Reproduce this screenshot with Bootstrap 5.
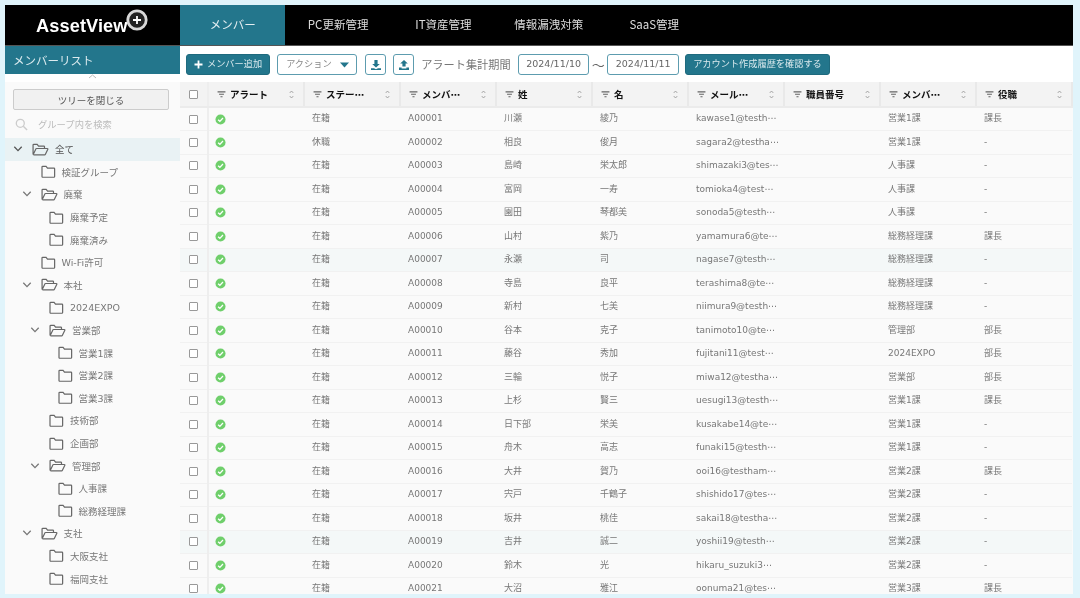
<!DOCTYPE html>
<html lang="ja">
<head>
<meta charset="utf-8">
<title>AssetView メンバー</title>
<link href="https://cdn.jsdelivr.net/npm/bootstrap@5.3.0/dist/css/bootstrap.min.css" rel="stylesheet">
<style>
:root{--teal:#23768c;}
html,body{height:598px;overflow:hidden;}
body{background:#e0f4fb;padding:5px 7px 4px 5px;font-family:"DejaVu Sans","Noto Sans CJK JP",sans-serif;font-size:9px;color:#777;}
.app-shell{height:589px;background:#fff;filter:blur(.3px);}
.top-bar{height:41px;background:#000;border-bottom:1px solid #555;flex:none;}
.logo-box{width:175px;color:#fff;padding-left:31px;}
.logo-word{font:700 18.2px/1 "Liberation Sans",sans-serif;letter-spacing:.1px;margin-top:12px;}
.logo-mark{margin-left:-2px;margin-top:4px;flex:none;}
.tab-item{width:105.4px;color:#ddd;font-family:"Noto Sans CJK JP",sans-serif;font-size:11.5px;text-decoration:none;}
.tab-item.active{background:var(--teal);color:#e4eef1;}
.side-pane{width:175px;flex:none;background:#fafafa;}
.side-title{height:28px;background:var(--teal);color:#dcebef;font:11.5px "Noto Sans CJK JP",sans-serif;padding:0 8px;}
.side-caret{height:8px;background:#fff;}
.close-tree{display:block;margin:7px 11px 0 8px;width:156px;height:21px;padding:0;background:#f1f1f1;border:1px solid #ccc;border-radius:2px;color:#555;font:9.5px "Noto Sans CJK JP",sans-serif;}
.tree-search{height:22px;margin:3px 0 3px;padding-left:10px;color:#bbb;font:9.3px "Noto Sans CJK JP",sans-serif;gap:10px;}
.tree-row{height:22.6px;font:9.5px "DejaVu Sans","Noto Sans CJK JP",sans-serif;color:#777;}
.tree-row.sel{background:#e9f2f4;color:#555;}
.tree-row .chev{width:14px;flex:none;margin-right:7px;text-align:center;line-height:0;}
.tree-row .fold{flex:none;margin-right:6px;}
.lv0{padding-left:6px;}.lv1{padding-left:14.5px;}.lv2{padding-left:23px;}.lv3{padding-left:31.5px;}
.main-pane{min-width:0;}
.tool-bar{height:36px;flex:none;padding:8px 0 0 6px;gap:7px;}
.btn-teal{height:21px;background:var(--teal);color:#dbeaee;border:1px solid #1f6a7e;border-radius:3px;font:9.2px "Noto Sans CJK JP",sans-serif;padding:0 7px 4px;white-space:nowrap;display:flex;align-items:center;}
.btn-teal:hover{background:var(--teal);color:#fff;}
.btn-teal svg{margin-top:3px;}
.btn-line{height:21px;background:#fff;border:1px solid #5d9caf;border-radius:3px;color:var(--teal);padding:0;display:flex;align-items:center;justify-content:center;font:9.2px "Noto Sans CJK JP",sans-serif;}
.action-sel{width:80px;justify-content:space-between;padding:0 7px 0 8px;color:#8a8a8a;}
.action-sel span{margin-top:-4px;}
.square-btn{width:21px;}
.first-square{margin-left:1px;}
.period-label{font:11.2px "Noto Sans CJK JP",sans-serif;color:#777;line-height:20px;white-space:nowrap;width:90px;}
.date-box{width:71px;height:21px;border:1px solid #5d9caf;border-radius:3px;font-size:9.5px;color:#666;text-align:center;line-height:18px;}
.date-box.second{width:72px;margin-right:-1px;}
.tilde{font:13px/21px "Noto Sans CJK JP",sans-serif;color:#666;margin:0 -4.5px;}
.grid-wrap{overflow:hidden;height:513px;background:#fafafa;}
.member-table{table-layout:fixed;width:892px;margin:0;font-size:9px;color:#777;}
.member-table th,.member-table td{padding:0 8px;background:#fafafa;color:#777;box-shadow:none;border-bottom:1px solid #f1f1f1;white-space:nowrap;overflow:hidden;vertical-align:middle;}
.member-table thead th{height:25px;background:#f3f3f3;color:#111;font:700 9.5px "DejaVu Sans","Noto Sans CJK JP",sans-serif;border-bottom:2px solid #ebebeb;border-right:2px solid #e9e9e9;}
.member-table tbody tr{height:23.5px;}
.member-table tbody td:nth-child(2){padding-left:6px;}
.member-table tbody td svg{display:block;}
.member-table tr.hl td{background:#f4f8f8;}
.member-table .chk-col{width:28px;padding:0;text-align:center;border-right:2px solid #eee;}
.member-table tbody .chk-col{padding:0;}
.member-table .data-col{width:96px;}
.member-table .form-check-input{width:9px;height:9px;margin:0;display:block;margin-inline:auto;border-color:#999;border-radius:1px;float:none;}
.head-cell{gap:4px;}
.head-cell .sort{margin-left:auto;flex:none;}
</style>
</head>
<body>
<svg width="0" height="0" class="d-none" aria-hidden="true">
<symbol id="i-ok" viewBox="0 0 12 12"><circle cx="6" cy="6" r="5.5" fill="#6fcf6b"/><path d="M3.4 6.2 5.3 8l3.4-3.7" fill="none" stroke="#fff" stroke-width="1.4"/></symbol>
<symbol id="i-filter" viewBox="0 0 10 8"><path d="M.5 1h9M2.2 3.8h5.6M3.8 6.6h2.4" fill="none" stroke="#666" stroke-width="1.2"/></symbol>
<symbol id="i-sort" viewBox="0 0 8 12"><path d="M2 4.2 4 2l2 2.2M2 7.8 4 10l2-2.2" fill="none" stroke="#999" stroke-width="1"/></symbol>
<symbol id="i-closed" viewBox="0 0 16 14"><path d="M1 12.4V2.2c0-.5.3-.8.8-.8h3.6l1.5 1.9h6.9c.5 0 .8.3.8.8v8.3c0 .5-.3.8-.8.8H1.8c-.5 0-.8-.3-.8-.8Z" fill="none" stroke="#666" stroke-width="1.3"/></symbol>
<symbol id="i-open" viewBox="0 0 18 14"><path d="M1 12.4V2.2c0-.5.3-.8.8-.8h3.6l1.5 1.9h5.6c.5 0 .8.3.8.8V6M1 12.6l3-6.2c.2-.3.4-.5.8-.5h11.6c.5 0 .7.4.5.8l-2.6 5.4c-.2.4-.4.6-.8.6H1.4" fill="none" stroke="#666" stroke-width="1.3"/></symbol>
<symbol id="i-chev" viewBox="0 0 10 8"><path d="M1.3 1.8 5 5.6l3.7-3.8" fill="none" stroke="currentColor" stroke-width="1.3"/></symbol>
<symbol id="i-down" viewBox="0 0 12 12"><path d="M4.4 1h3.2v4h2.2L6 8.4 2.2 5h2.2ZM1 9.2h3l2 1 2-1h3V11H1Z" fill="#23768c"/></symbol>
<symbol id="i-up" viewBox="0 0 12 12"><path d="M4.4 7.6h3.2v-3h2.2L6 1 2.2 4.6h2.2ZM1 8.6h2.6v1h4.8v-1H11V11H1Z" fill="#23768c"/></symbol>
</svg>
<div class="app-shell d-flex flex-column">
  <header class="top-bar d-flex">
    <div class="logo-box d-flex align-items-start">
      <span class="logo-word">AssetView</span>
      <svg class="logo-mark" width="22" height="22" viewBox="0 0 22 22"><circle cx="11" cy="11" r="9.2" fill="#222" stroke="#d8d8d8" stroke-width="2.8"/><path d="M11 7v8M7 11h8" stroke="#fff" stroke-width="1.8"/></svg>
    </div>
    <nav class="d-flex">
      <a class="tab-item active d-flex align-items-center justify-content-center" href="#">メンバー</a>
      <a class="tab-item d-flex align-items-center justify-content-center" href="#">PC更新管理</a>
      <a class="tab-item d-flex align-items-center justify-content-center" href="#">IT資産管理</a>
      <a class="tab-item d-flex align-items-center justify-content-center" href="#">情報漏洩対策</a>
      <a class="tab-item d-flex align-items-center justify-content-center" href="#">SaaS管理</a>
    </nav>
  </header>
  <div class="d-flex flex-grow-1 overflow-hidden">
    <aside class="side-pane overflow-hidden">
      <div class="side-title d-flex align-items-center">メンバーリスト</div>
      <div class="side-caret d-flex justify-content-center"><svg width="9" height="5" viewBox="0 0 9 5"><path d="M1 4 4.5 1 8 4" fill="none" stroke="#bbb"/></svg></div>
      <button type="button" class="btn close-tree">ツリーを閉じる</button>
      <div class="tree-search d-flex align-items-center"><svg width="13" height="13" viewBox="0 0 13 13"><circle cx="5.3" cy="5.3" r="4" fill="none" stroke="#ccc" stroke-width="1.3"/><path d="m8.3 8.3 3.8 3.8" stroke="#ccc" stroke-width="1.4"/></svg><span>グループ内を検索</span></div>
      <div class="tree-row sel lv0 d-flex align-items-center"><span class="chev"><svg width="10" height="8"><use href="#i-chev"/></svg></span><svg class="fold" width="17" height="13"><use href="#i-open"/></svg>全て</div>
      <div class="tree-row lv1 d-flex align-items-center"><span class="chev"></span><svg class="fold" width="15" height="13"><use href="#i-closed"/></svg>検証グループ</div>
      <div class="tree-row lv1 d-flex align-items-center"><span class="chev"><svg width="10" height="8"><use href="#i-chev"/></svg></span><svg class="fold" width="17" height="13"><use href="#i-open"/></svg>廃棄</div>
      <div class="tree-row lv2 d-flex align-items-center"><span class="chev"></span><svg class="fold" width="15" height="13"><use href="#i-closed"/></svg>廃棄予定</div>
      <div class="tree-row lv2 d-flex align-items-center"><span class="chev"></span><svg class="fold" width="15" height="13"><use href="#i-closed"/></svg>廃棄済み</div>
      <div class="tree-row lv1 d-flex align-items-center"><span class="chev"></span><svg class="fold" width="15" height="13"><use href="#i-closed"/></svg>Wi-Fi許可</div>
      <div class="tree-row lv1 d-flex align-items-center"><span class="chev"><svg width="10" height="8"><use href="#i-chev"/></svg></span><svg class="fold" width="17" height="13"><use href="#i-open"/></svg>本社</div>
      <div class="tree-row lv2 d-flex align-items-center"><span class="chev"></span><svg class="fold" width="15" height="13"><use href="#i-closed"/></svg>2024EXPO</div>
      <div class="tree-row lv2 d-flex align-items-center"><span class="chev"><svg width="10" height="8"><use href="#i-chev"/></svg></span><svg class="fold" width="17" height="13"><use href="#i-open"/></svg>営業部</div>
      <div class="tree-row lv3 d-flex align-items-center"><span class="chev"></span><svg class="fold" width="15" height="13"><use href="#i-closed"/></svg>営業1課</div>
      <div class="tree-row lv3 d-flex align-items-center"><span class="chev"></span><svg class="fold" width="15" height="13"><use href="#i-closed"/></svg>営業2課</div>
      <div class="tree-row lv3 d-flex align-items-center"><span class="chev"></span><svg class="fold" width="15" height="13"><use href="#i-closed"/></svg>営業3課</div>
      <div class="tree-row lv2 d-flex align-items-center"><span class="chev"></span><svg class="fold" width="15" height="13"><use href="#i-closed"/></svg>技術部</div>
      <div class="tree-row lv2 d-flex align-items-center"><span class="chev"></span><svg class="fold" width="15" height="13"><use href="#i-closed"/></svg>企画部</div>
      <div class="tree-row lv2 d-flex align-items-center"><span class="chev"><svg width="10" height="8"><use href="#i-chev"/></svg></span><svg class="fold" width="17" height="13"><use href="#i-open"/></svg>管理部</div>
      <div class="tree-row lv3 d-flex align-items-center"><span class="chev"></span><svg class="fold" width="15" height="13"><use href="#i-closed"/></svg>人事課</div>
      <div class="tree-row lv3 d-flex align-items-center"><span class="chev"></span><svg class="fold" width="15" height="13"><use href="#i-closed"/></svg>総務経理課</div>
      <div class="tree-row lv1 d-flex align-items-center"><span class="chev"><svg width="10" height="8"><use href="#i-chev"/></svg></span><svg class="fold" width="17" height="13"><use href="#i-open"/></svg>支社</div>
      <div class="tree-row lv2 d-flex align-items-center"><span class="chev"></span><svg class="fold" width="15" height="13"><use href="#i-closed"/></svg>大阪支社</div>
      <div class="tree-row lv2 d-flex align-items-center"><span class="chev"></span><svg class="fold" width="15" height="13"><use href="#i-closed"/></svg>福岡支社</div>
    </aside>
    <main class="main-pane flex-grow-1 d-flex flex-column">
      <div class="tool-bar d-flex align-items-start">
        <button type="button" class="btn btn-teal"><svg class="me-1" width="9" height="9" viewBox="0 0 9 9"><path d="M4.5.5v8M.5 4.5h8" stroke="#fff" stroke-width="1.8"/></svg>メンバー追加</button>
        <button type="button" class="btn btn-line action-sel"><span>アクション</span><svg width="9" height="6" viewBox="0 0 9 6"><path d="M0 .5h9L4.5 5.5Z" fill="#23768c"/></svg></button>
        <button type="button" class="btn btn-line square-btn first-square"><svg width="12" height="12"><use href="#i-down"/></svg></button>
        <button type="button" class="btn btn-line square-btn"><svg width="12" height="12"><use href="#i-up"/></svg></button>
        <span class="period-label">アラート集計期間</span>
        <span class="date-box">2024/11/10</span>
        <span class="tilde">～</span>
        <span class="date-box second">2024/11/11</span>
        <button type="button" class="btn btn-teal">アカウント作成履歴を確認する</button>
      </div>
      <div class="grid-wrap">
        <table class="table member-table">
          <thead><tr>
            <th class="chk-col"><input class="form-check-input" type="checkbox" aria-label="全選択"></th>
            <th class="data-col"><div class="head-cell d-flex align-items-center"><svg width="9" height="7"><use href="#i-filter"/></svg>アラート<svg class="sort" width="7" height="11"><use href="#i-sort"/></svg></div></th>
            <th class="data-col"><div class="head-cell d-flex align-items-center"><svg width="9" height="7"><use href="#i-filter"/></svg>ステー⋯<svg class="sort" width="7" height="11"><use href="#i-sort"/></svg></div></th>
            <th class="data-col"><div class="head-cell d-flex align-items-center"><svg width="9" height="7"><use href="#i-filter"/></svg>メンバ⋯<svg class="sort" width="7" height="11"><use href="#i-sort"/></svg></div></th>
            <th class="data-col"><div class="head-cell d-flex align-items-center"><svg width="9" height="7"><use href="#i-filter"/></svg>姓<svg class="sort" width="7" height="11"><use href="#i-sort"/></svg></div></th>
            <th class="data-col"><div class="head-cell d-flex align-items-center"><svg width="9" height="7"><use href="#i-filter"/></svg>名<svg class="sort" width="7" height="11"><use href="#i-sort"/></svg></div></th>
            <th class="data-col"><div class="head-cell d-flex align-items-center"><svg width="9" height="7"><use href="#i-filter"/></svg>メール⋯<svg class="sort" width="7" height="11"><use href="#i-sort"/></svg></div></th>
            <th class="data-col"><div class="head-cell d-flex align-items-center"><svg width="9" height="7"><use href="#i-filter"/></svg>職員番号<svg class="sort" width="7" height="11"><use href="#i-sort"/></svg></div></th>
            <th class="data-col"><div class="head-cell d-flex align-items-center"><svg width="9" height="7"><use href="#i-filter"/></svg>メンバ⋯<svg class="sort" width="7" height="11"><use href="#i-sort"/></svg></div></th>
            <th class="data-col"><div class="head-cell d-flex align-items-center"><svg width="9" height="7"><use href="#i-filter"/></svg>役職<svg class="sort" width="7" height="11"><use href="#i-sort"/></svg></div></th>
          </tr></thead>
          <tbody>
            <tr><td class="chk-col"><input class="form-check-input" type="checkbox" aria-label="選択"></td><td><svg width="11" height="11"><use href="#i-ok"/></svg></td><td>在籍</td><td>A00001</td><td>川瀬</td><td>綾乃</td><td>kawase1@testh⋯</td><td></td><td>営業1課</td><td>課長</td></tr>
            <tr><td class="chk-col"><input class="form-check-input" type="checkbox" aria-label="選択"></td><td><svg width="11" height="11"><use href="#i-ok"/></svg></td><td>休職</td><td>A00002</td><td>相良</td><td>俊月</td><td>sagara2@testha⋯</td><td></td><td>営業1課</td><td>-</td></tr>
            <tr><td class="chk-col"><input class="form-check-input" type="checkbox" aria-label="選択"></td><td><svg width="11" height="11"><use href="#i-ok"/></svg></td><td>在籍</td><td>A00003</td><td>島崎</td><td>栄太郎</td><td>shimazaki3@tes⋯</td><td></td><td>人事課</td><td>-</td></tr>
            <tr><td class="chk-col"><input class="form-check-input" type="checkbox" aria-label="選択"></td><td><svg width="11" height="11"><use href="#i-ok"/></svg></td><td>在籍</td><td>A00004</td><td>富岡</td><td>一寿</td><td>tomioka4@test⋯</td><td></td><td>人事課</td><td>-</td></tr>
            <tr><td class="chk-col"><input class="form-check-input" type="checkbox" aria-label="選択"></td><td><svg width="11" height="11"><use href="#i-ok"/></svg></td><td>在籍</td><td>A00005</td><td>園田</td><td>琴都美</td><td>sonoda5@testh⋯</td><td></td><td>人事課</td><td>-</td></tr>
            <tr><td class="chk-col"><input class="form-check-input" type="checkbox" aria-label="選択"></td><td><svg width="11" height="11"><use href="#i-ok"/></svg></td><td>在籍</td><td>A00006</td><td>山村</td><td>紫乃</td><td>yamamura6@te⋯</td><td></td><td>総務経理課</td><td>課長</td></tr>
            <tr class="hl"><td class="chk-col"><input class="form-check-input" type="checkbox" aria-label="選択"></td><td><svg width="11" height="11"><use href="#i-ok"/></svg></td><td>在籍</td><td>A00007</td><td>永瀬</td><td>司</td><td>nagase7@testh⋯</td><td></td><td>総務経理課</td><td>-</td></tr>
            <tr><td class="chk-col"><input class="form-check-input" type="checkbox" aria-label="選択"></td><td><svg width="11" height="11"><use href="#i-ok"/></svg></td><td>在籍</td><td>A00008</td><td>寺島</td><td>良平</td><td>terashima8@te⋯</td><td></td><td>総務経理課</td><td>-</td></tr>
            <tr><td class="chk-col"><input class="form-check-input" type="checkbox" aria-label="選択"></td><td><svg width="11" height="11"><use href="#i-ok"/></svg></td><td>在籍</td><td>A00009</td><td>新村</td><td>七美</td><td>niimura9@testh⋯</td><td></td><td>総務経理課</td><td>-</td></tr>
            <tr><td class="chk-col"><input class="form-check-input" type="checkbox" aria-label="選択"></td><td><svg width="11" height="11"><use href="#i-ok"/></svg></td><td>在籍</td><td>A00010</td><td>谷本</td><td>克子</td><td>tanimoto10@te⋯</td><td></td><td>管理部</td><td>部長</td></tr>
            <tr><td class="chk-col"><input class="form-check-input" type="checkbox" aria-label="選択"></td><td><svg width="11" height="11"><use href="#i-ok"/></svg></td><td>在籍</td><td>A00011</td><td>藤谷</td><td>秀加</td><td>fujitani11@test⋯</td><td></td><td>2024EXPO</td><td>部長</td></tr>
            <tr><td class="chk-col"><input class="form-check-input" type="checkbox" aria-label="選択"></td><td><svg width="11" height="11"><use href="#i-ok"/></svg></td><td>在籍</td><td>A00012</td><td>三輪</td><td>悦子</td><td>miwa12@testha⋯</td><td></td><td>営業部</td><td>部長</td></tr>
            <tr><td class="chk-col"><input class="form-check-input" type="checkbox" aria-label="選択"></td><td><svg width="11" height="11"><use href="#i-ok"/></svg></td><td>在籍</td><td>A00013</td><td>上杉</td><td>賢三</td><td>uesugi13@testh⋯</td><td></td><td>営業1課</td><td>課長</td></tr>
            <tr><td class="chk-col"><input class="form-check-input" type="checkbox" aria-label="選択"></td><td><svg width="11" height="11"><use href="#i-ok"/></svg></td><td>在籍</td><td>A00014</td><td>日下部</td><td>栄美</td><td>kusakabe14@te⋯</td><td></td><td>営業1課</td><td>-</td></tr>
            <tr><td class="chk-col"><input class="form-check-input" type="checkbox" aria-label="選択"></td><td><svg width="11" height="11"><use href="#i-ok"/></svg></td><td>在籍</td><td>A00015</td><td>舟木</td><td>高志</td><td>funaki15@testh⋯</td><td></td><td>営業1課</td><td>-</td></tr>
            <tr><td class="chk-col"><input class="form-check-input" type="checkbox" aria-label="選択"></td><td><svg width="11" height="11"><use href="#i-ok"/></svg></td><td>在籍</td><td>A00016</td><td>大井</td><td>賀乃</td><td>ooi16@testham⋯</td><td></td><td>営業2課</td><td>課長</td></tr>
            <tr><td class="chk-col"><input class="form-check-input" type="checkbox" aria-label="選択"></td><td><svg width="11" height="11"><use href="#i-ok"/></svg></td><td>在籍</td><td>A00017</td><td>宍戸</td><td>千鶴子</td><td>shishido17@tes⋯</td><td></td><td>営業2課</td><td>-</td></tr>
            <tr><td class="chk-col"><input class="form-check-input" type="checkbox" aria-label="選択"></td><td><svg width="11" height="11"><use href="#i-ok"/></svg></td><td>在籍</td><td>A00018</td><td>坂井</td><td>桃佳</td><td>sakai18@testha⋯</td><td></td><td>営業2課</td><td>-</td></tr>
            <tr class="hl"><td class="chk-col"><input class="form-check-input" type="checkbox" aria-label="選択"></td><td><svg width="11" height="11"><use href="#i-ok"/></svg></td><td>在籍</td><td>A00019</td><td>吉井</td><td>誠二</td><td>yoshii19@testh⋯</td><td></td><td>営業2課</td><td>-</td></tr>
            <tr><td class="chk-col"><input class="form-check-input" type="checkbox" aria-label="選択"></td><td><svg width="11" height="11"><use href="#i-ok"/></svg></td><td>在籍</td><td>A00020</td><td>鈴木</td><td>光</td><td>hikaru_suzuki3⋯</td><td></td><td>営業2課</td><td>-</td></tr>
            <tr><td class="chk-col"><input class="form-check-input" type="checkbox" aria-label="選択"></td><td><svg width="11" height="11"><use href="#i-ok"/></svg></td><td>在籍</td><td>A00021</td><td>大沼</td><td>雅江</td><td>oonuma21@tes⋯</td><td></td><td>営業3課</td><td>課長</td></tr>
          </tbody>
        </table>
      </div>
    </main>
  </div>
</div>
<script src="https://cdn.jsdelivr.net/npm/bootstrap@5.3.0/dist/js/bootstrap.bundle.min.js"></script>
</body>
</html>
